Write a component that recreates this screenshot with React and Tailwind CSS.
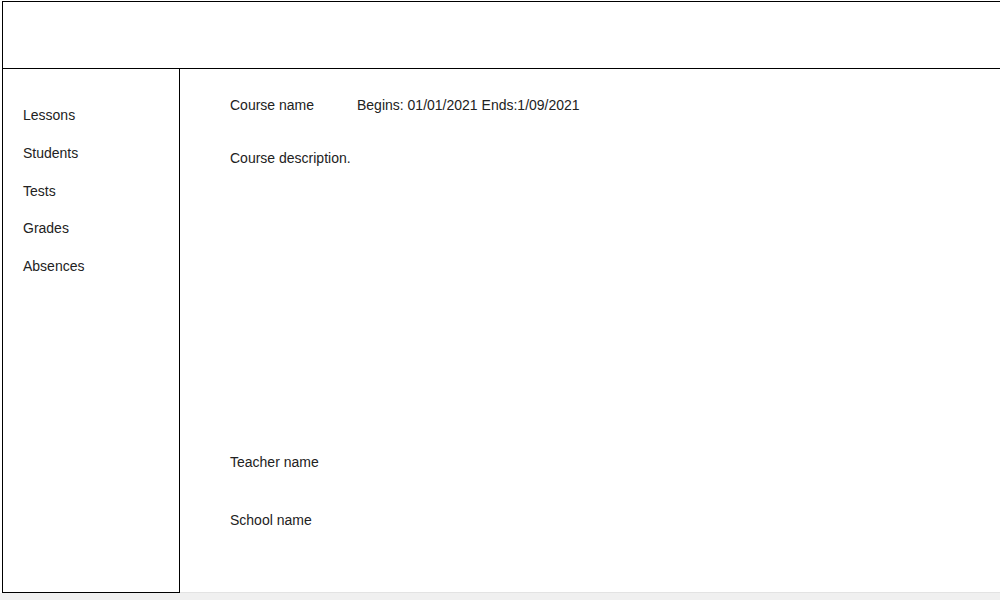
export default function App() {
  return (
    <div
      className="w-[1000px] h-[600px] overflow-hidden bg-white flex flex-col text-[14px] leading-[16px] text-[#222]"
      style={{ fontFamily: '"Liberation Sans", Arial, sans-serif' }}
    >
      <header className="mt-[1px] ml-[2px] w-[1010px] h-[68px] shrink-0 border border-black" />
      <div className="flex h-[524px] shrink-0">
        <nav className="ml-[2px] w-[178px] border-l border-r border-b border-black pt-[27px] pl-[20px] flex flex-col">
          <div className="h-[38px] flex items-center">Lessons</div>
          <div className="h-[38px] flex items-center">Students</div>
          <div className="h-[37px] flex items-center">Tests</div>
          <div className="h-[38px] flex items-center">Grades</div>
          <div className="h-[38px] flex items-center">Absences</div>
        </nav>
        <main className="flex-1 border-b border-[#e3e3e3] pl-[50px] pt-[28px] flex flex-col">
          <div className="flex">
            <span className="w-[127px]">Course name</span>
            <span>Begins: 01/01/2021 Ends:1/09/2021</span>
          </div>
          <p className="mt-[37px]">Course description.</p>
          <p className="mt-[288px]">Teacher name</p>
          <p className="mt-[42px]">School name</p>
        </main>
      </div>
      <div className="h-[7px] shrink-0 bg-[#f0f0f0]" />
    </div>
  );
}
